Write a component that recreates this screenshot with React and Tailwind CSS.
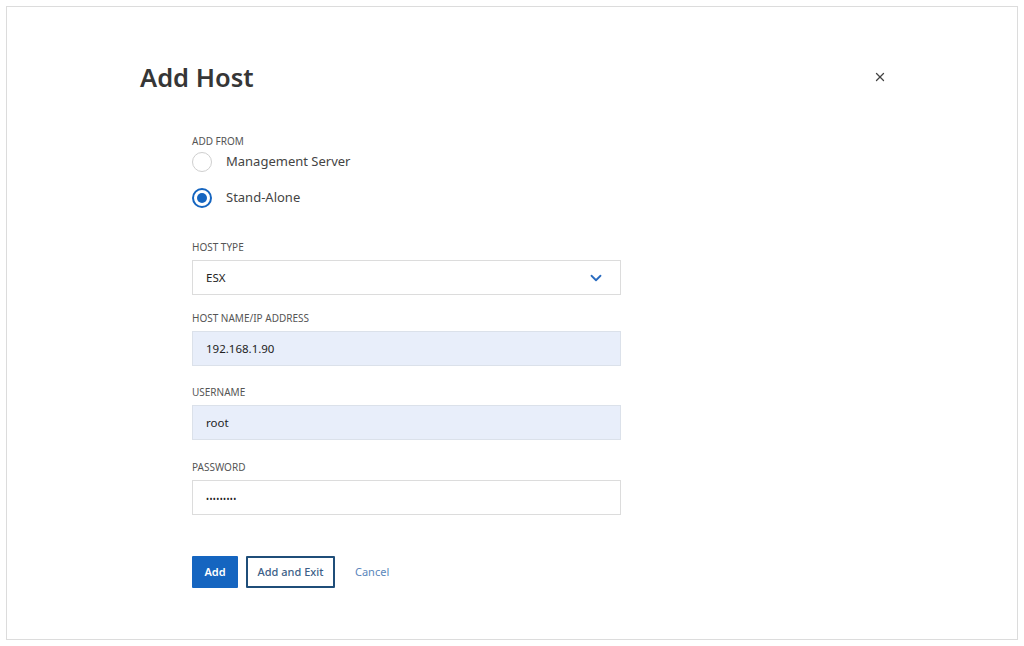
import { X, ChevronDown } from 'lucide-react';

function Label({ children, className = '' }) {
  return (
    <div className={`h-[14px] text-[10px] leading-[14px] uppercase text-[#555] ${className}`}>{children}</div>
  );
}

function Radio({ checked, label, className = '' }) {
  return (
    <div className={`flex items-center h-[24px] ${className}`}>
      {checked ? (
        <span className="w-[20px] h-[20px] rounded-full border-2 border-[#1565c0] flex items-center justify-center">
          <span className="w-[10px] h-[10px] rounded-full bg-[#1565c0]" />
        </span>
      ) : (
        <span className="w-[20px] h-[20px] rounded-full border-[1.5px] border-[#cfcfcf]" />
      )}
      <span className="ml-[14px] text-[13px] text-[#444]">{label}</span>
    </div>
  );
}

function Field({ value, filled, className = '', children }) {
  return (
    <div
      className={`h-[35px] flex items-center px-[13px] border text-[11.5px] text-[#222] ${
        filled ? 'bg-[#e8eefa] border-[#dbe1ea]' : 'bg-white border-[#dcdcdc]'
      } ${className}`}
    >
      <span className="flex-1">{value}</span>
      {children}
    </div>
  );
}

export default function App() {
  return (
    <div className="w-[1024px] h-[646px] bg-white p-[6px] flex" style={{ fontFamily: '"Noto Sans", "Open Sans", sans-serif' }}>
      <div className="flex-1 border border-[#dcdcdc] pt-[54px]">
        <div className="flex items-center justify-between pl-[133px] pr-[130px] h-[32px]">
          <h1 className="text-[25.5px] leading-[32px] font-semibold text-[#363636]">Add Host</h1>
          <X className="w-[14px] h-[14px] text-[#444]" strokeWidth={2.2} />
        </div>

        <div className="ml-[185px] w-[429px] mt-[41px]">
          <Label>Add From</Label>
          <Radio label="Management Server" className="mt-[2px]" />
          <Radio checked label="Stand-Alone" className="mt-[12px]" />

          <Label className="mt-[30px]">Host Type</Label>
          <Field value="ESX" className="mt-[6px]">
            <ChevronDown className="w-[18px] h-[18px] text-[#2a6cc0] mr-[2px]" strokeWidth={2.4} />
          </Field>

          <Label className="mt-[16px]">Host Name/IP Address</Label>
          <Field value="192.168.1.90" filled className="mt-[6px]" />

          <Label className="mt-[19px]">Username</Label>
          <Field value="root" filled className="mt-[6px]" />

          <Label className="mt-[20px]">Password</Label>
          <Field value={<span className="text-[8px] tracking-[0.4px]">•••••••••</span>} className="mt-[6px]" />

          <div className="flex items-center mt-[41px]">
            <button className="w-[46px] h-[32px] bg-[#1565c0] text-white text-[11px] font-semibold rounded-[1px]">Add</button>
            <button className="ml-[8px] w-[89px] h-[32px] border-2 border-[#1f4e79] text-[#3d5f88] text-[11px] font-medium rounded-[1px]">Add and Exit</button>
            <button className="ml-[20px] text-[11px] text-[#5a86bb]">Cancel</button>
          </div>
        </div>
      </div>
    </div>
  );
}
